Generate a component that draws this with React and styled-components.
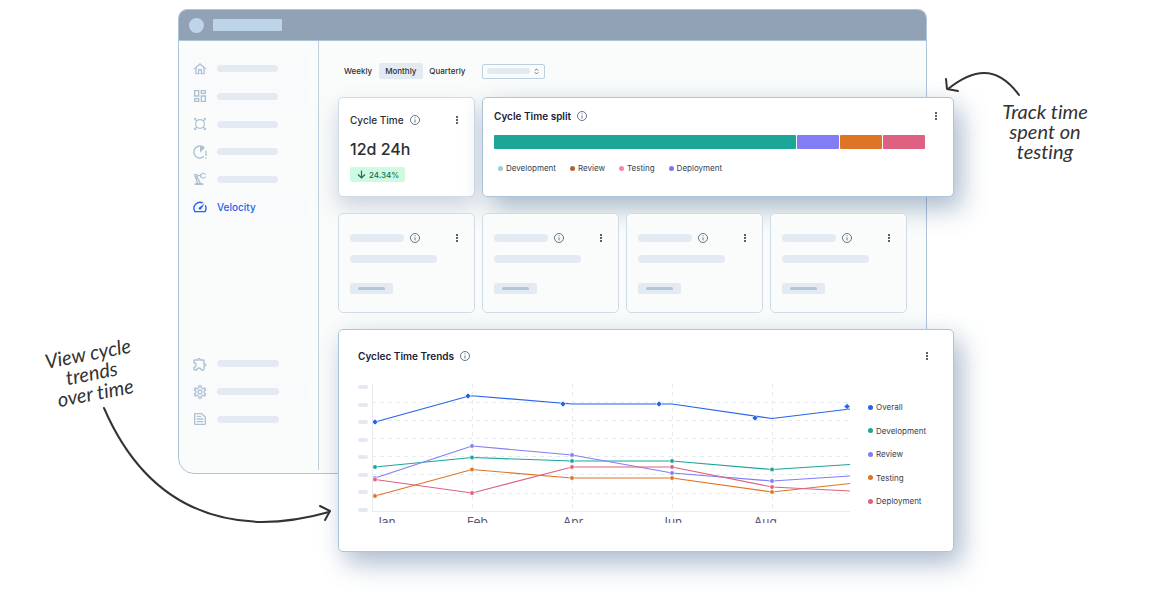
import React from 'react';
import styled, { createGlobalStyle } from 'styled-components';
import {
  MdOutlineHome,
  MdOutlineDashboard,
  MdRunningWithErrors,
  MdOutlinePrecisionManufacturing,
  MdOutlineSpeed,
  MdOutlineExtension,
  MdOutlineSettings,
  MdOutlineTextSnippet,
} from 'react-icons/md';

const colors = {
  surface: '#fafcfb',
  border: '#aec4d8',
  softBorder: '#cfdce8',
  bar: '#e4eaf2',
  header: '#91a2b5',
  icon: '#adc1d3',
  ink: '#2c2e36',
  blue: '#2563eb',
  teal: '#1ba698',
  violet: '#827df4',
  orange: '#de7425',
  pink: '#de6181',
};

const floating = `
  0 0 22px rgba(75, 110, 155, 0.06),
  8px 12px 26px rgba(75, 105, 145, 0.42)
`;

const GlobalStyle = createGlobalStyle`
  * {
    box-sizing: border-box;
  }
  body {
    margin: 0;
    background: #fff;
    color: ${colors.ink};
    font-family: Inter, "Liberation Sans", sans-serif;
  }
  button {
    border: 0;
    padding: 0;
    background: none;
    color: inherit;
    font-family: inherit;
    cursor: pointer;
  }
`;

const Page = styled.div`
  position: relative;
  display: grid;
  grid-template-columns: 178px minmax(0, 1fr) 204px;
  padding: 9px 0 39px;
`;

const Note = styled.p`
  justify-self: center;
  align-self: start;
  margin: 0;
  color: #333;
  font: italic 400 20px/20px Lato, sans-serif;
  font-variant-ligatures: none;
  text-align: center;
`;

const LeftNote = styled(Note)`
  margin-top: 334px;
  padding-left: 6px;
  transform: rotate(-11deg);
`;

const RightNote = styled(Note)`
  margin-top: 92px;
  padding-right: 22px;
`;

const Arrow = styled.svg`
  position: absolute;
  fill: none;
  stroke: #333;
  stroke-width: 2;
  stroke-linecap: round;
  stroke-linejoin: round;
  pointer-events: none;
`;

const LeftArrow = styled(Arrow)`
  left: 100px;
  top: 404px;
`;

const RightArrow = styled(Arrow)`
  right: 136px;
  top: 68px;
`;

const Window = styled.div`
  align-self: start;
  margin: 0 27px 78px 0;
  border: 1px solid ${colors.border};
  border-radius: 9px 9px 0 16px;
  background: ${colors.surface};
`;

const TitleBar = styled.header`
  display: flex;
  align-items: center;
  gap: 9px;
  height: 31px;
  padding: 0 10px;
  border-bottom: 1px solid ${colors.border};
  border-radius: 8px 8px 0 0;
  background: ${colors.header};
`;

const Avatar = styled.span`
  width: 15px;
  height: 15px;
  border-radius: 50%;
  background: #bed4e9;
`;

const Brand = styled.span`
  width: 69px;
  height: 12px;
  border-radius: 1px;
  background: #bed4e9;
`;

const Body = styled.div`
  display: grid;
  grid-template-columns: 140px minmax(0, 1fr);
`;

const Sidebar = styled.nav`
  display: flex;
  flex-direction: column;
  justify-content: space-between;
  margin-bottom: 3px;
  padding: 14px 10px 37px 7px;
  border-right: 1px solid #bed0e0;
`;

const NavGroup = styled.div`
  display: grid;
  grid-auto-rows: 1fr;
  height: ${({ $height }) => $height}px;
`;

const NavLink = styled.a`
  display: flex;
  align-items: center;
  gap: 9px;
  padding-left: 6px;
  border-radius: 2px;
  background: ${({ $tint }) => ($tint ? '#f9fafc' : 'transparent')};
  color: ${({ $active }) => ($active ? colors.blue : colors.icon)};
  font-size: 10px;
  font-weight: 500;
  text-decoration: none;
`;

const Skeleton = styled.span`
  display: block;
  width: ${({ $width }) => $width}px;
  height: ${({ $height }) => $height || 8}px;
  border-radius: 4px;
  background: ${colors.bar};
`;

const Main = styled.main`
  padding: 22px 19px 0;
`;

const Toolbar = styled.div`
  display: flex;
  align-items: center;
  gap: 10px;
  margin-bottom: 18px;
`;

const Tabs = styled.div`
  display: flex;
`;

const Tab = styled.button`
  height: 16px;
  padding: 0 7px 0 6px;
  border-radius: 2px;
  background: ${({ $active }) => ($active ? colors.bar : 'none')};
  font-size: 8px;
  font-weight: 500;
`;

const Picker = styled.label`
  display: grid;
  grid-template-columns: 1fr auto;
  align-items: center;
  width: 63px;
  height: 15px;
  padding: 0 5px 0 4px;
  border: 1px solid #bccfe0;
  border-radius: 2px;
`;

const PickerSelect = styled.select`
  grid-area: 1 / 1 / 2 / 3;
  width: 100%;
  height: 12px;
  border: 0;
  background: none;
  appearance: none;
  font-size: 8px;
`;

const PickerBar = styled(Skeleton)`
  grid-area: 1 / 1;
`;

const PickerIcon = styled.svg`
  grid-area: 1 / 2;
`;

const Cards = styled.div`
  display: grid;
  grid-template-columns: repeat(4, minmax(0, 1fr));
  gap: 7px;
  margin-bottom: 16px;
`;

const Card = styled.section`
  min-height: 100px;
  padding: 15px 11px 0;
  border: 1px solid ${colors.softBorder};
  border-radius: 5px;
  background: #fff;
`;

const MetricCard = styled(Card)`
  box-shadow: 0 10px 22px rgba(70, 95, 140, 0.26);
`;

const SplitCard = styled(Card)`
  grid-column: 2 / 5;
  margin-right: -47px;
  padding-top: 11px;
  border-color: ${colors.border};
  box-shadow: ${floating};
`;

const EmptyCard = styled(Card)`
  padding-top: 17px;
  background: ${colors.surface};
`;

const TrendCard = styled(Card)`
  margin: 0 -47px -79px 0;
  padding: 19px 20px 28px 19px;
  border-color: ${colors.border};
  box-shadow: ${floating};
`;

const CardHeader = styled.div`
  display: flex;
  align-items: center;
  gap: 5px;
  height: 14px;
`;

const Title = styled.h2`
  margin: 0;
  color: ${({ $strong }) => ($strong ? '#1c2033' : colors.ink)};
  font-size: 10px;
  font-weight: ${({ $strong }) => ($strong ? 600 : 500)};
  line-height: 14px;
  white-space: nowrap;
`;

const MenuButton = styled.button`
  display: flex;
  justify-content: center;
  width: 12px;
  margin-left: auto;
`;

const Value = styled.div`
  margin: 12px 0 8px;
  font-size: 16px;
  font-weight: 500;
  line-height: 20px;
`;

const Change = styled.div`
  display: flex;
  align-items: center;
  gap: 3px;
  width: fit-content;
  height: 15px;
  padding: 0 6px 0 7px;
  border-radius: 2px;
  background: #cffae2;
  color: #146c54;
  font-size: 8px;
  font-weight: 500;
`;

const Split = styled.div`
  display: flex;
  gap: 1px;
  height: 14px;
  margin: 12px 17px 13px 0;
`;

const SplitPart = styled.span`
  flex: ${({ $share }) => $share} 1 0;
  border-radius: 1px;
  background: ${({ $color }) => $color};
`;

const Legend = styled.ul`
  display: flex;
  flex-direction: ${({ $vertical }) => ($vertical ? 'column' : 'row')};
  justify-content: ${({ $vertical }) => ($vertical ? 'space-between' : 'flex-start')};
  gap: ${({ $vertical }) => ($vertical ? 0 : 14)}px;
  margin: 0;
  padding: ${({ $vertical }) => ($vertical ? '17px 7px 16px 0' : '0 4px')};
  list-style: none;
`;

const LegendItem = styled.li`
  display: flex;
  align-items: center;
  gap: 3px;
  color: #374151;
  font-size: 8px;
  line-height: 12px;
  &::before {
    content: '';
    width: 5px;
    height: 5px;
    border-radius: 50%;
    background: ${({ $color }) => $color};
  }
`;

const SkeletonLine = styled(Skeleton)`
  margin: 10px 0 20px;
`;

const Tag = styled.span`
  display: flex;
  align-items: center;
  justify-content: center;
  width: 43px;
  height: 11px;
  border-radius: 2px;
  background: ${colors.bar};
  &::before {
    content: '';
    width: 27px;
    height: 3px;
    border-radius: 2px;
    background: #b0c6d9;
  }
`;

const ChartRow = styled.div`
  display: flex;
  margin-top: 21px;
`;

const YAxis = styled.div`
  display: flex;
  flex-direction: column;
  justify-content: space-between;
  height: 127px;
  margin: 1px 4px 0 0;
`;

const Chart = styled.svg`
  flex: 1;
  min-width: 0;
  margin-right: 18px;
`;

const MonthLabel = styled.text`
  fill: #5b5478;
  font-size: 12px;
`;

const DetectIcon = ({ size }) => (
  <svg width={size} height={size} viewBox="0 0 24 24" fill="none" stroke="currentColor" strokeWidth="1.800">
    <circle cx="12" cy="12" r="6.500" />
    <path d="M4 6.500V4h2.500M17.500 4H20v2.500M20 17.500V20h-2.500M6.500 20H4v-2.500M5.500 5.500l2 2M18.500 5.500l-2 2M5.500 18.500l2-2M18.500 18.500l-2-2" />
  </svg>
);

const InfoIcon = () => (
  <svg width="12" height="12" viewBox="0 0 12 12" fill="none" stroke="#64748b">
    <circle cx="6" cy="6" r="4.500" />
    <path d="M6 5.500v3M6 3.300v1" />
  </svg>
);

const Menu = () => (
  <MenuButton type="button" aria-label="More options">
    <svg width="4" height="10" viewBox="0 0 4 10" fill="#252b3b">
      <circle cx="2" cy="2" r="1" />
      <circle cx="2" cy="5" r="1" />
      <circle cx="2" cy="8" r="1" />
    </svg>
  </MenuButton>
);

const topLinks = [
  { name: 'Home', icon: MdOutlineHome, tint: true },
  { name: 'Dashboard', icon: MdOutlineDashboard, tint: true },
  { name: 'Detection', icon: DetectIcon },
  { name: 'Incidents', icon: MdRunningWithErrors },
  { name: 'Automation', icon: MdOutlinePrecisionManufacturing },
  { name: 'Velocity', icon: MdOutlineSpeed, tint: true, active: true },
];

const bottomLinks = [
  { name: 'Extensions', icon: MdOutlineExtension },
  { name: 'Settings', icon: MdOutlineSettings, tint: true },
  { name: 'Docs', icon: MdOutlineTextSnippet },
];

const split = [
  { share: 302, color: colors.teal },
  { share: 42, color: colors.violet },
  { share: 42, color: colors.orange },
  { share: 42, color: colors.pink },
];

const splitLegend = [
  { name: 'Development', color: '#98d3cb' },
  { name: 'Review', color: '#b2633b' },
  { name: 'Testing', color: '#f587ad' },
  { name: 'Deployment', color: '#7b75f0' },
];

const xs = [3, 100, 200, 300, 400, 478];

const series = [
  { name: 'Development', color: colors.teal, ys: [83, 73.5, 77, 77, 85.500, 80.500] },
  { name: 'Review', color: colors.violet, ys: [94, 62, 71, 89, 97, 92] },
  { name: 'Testing', color: colors.orange, ys: [112, 85.500, 94, 94, 108, 99.500] },
  { name: 'Deployment', color: colors.pink, ys: [95.500, 109, 83, 83, 103, 107] },
];

const overall = {
  line: '3,38 97,12 103,12 200,20 300,20 400,34.500 478,25',
  marks: [[3, 38], [96, 12], [191, 20], [287, 20], [383, 34], [475, 22.500]],
};

const months = [
  { name: 'Jan', x: 3 },
  { name: 'Feb', x: 95 },
  { name: 'Apr', x: 191 },
  { name: 'Jun', x: 289 },
  { name: 'Aug', x: 382 },
];

const NavItem = ({ name, icon: Icon, tint, active, width }) => (
  <NavLink href="#" aria-label={name} $tint={tint} $active={active}>
    <Icon size={16} />
    {active ? name : <Skeleton $width={width} $height={7} />}
  </NavLink>
);

const TrendChart = () => (
  <Chart viewBox="0 0 478 139">
    <g stroke="#e6ebf0" fill="none">
      <path d="M.5 0v127.500H478" />
      <path
        strokeDasharray="4 4"
        d="M0 18.500h478M0 36.500h478M0 54.500h478M0 72.500h478M0 90.500h478M0 109.500h478"
      />
      <path strokeDasharray="4 4" d="M100.500 0v127M200.500 0v127M300.500 0v127M400.500 0v127" />
    </g>
    {series.map(({ name, color, ys }) => (
      <g key={name}>
        <polyline
          points={ys.map((y, i) => `${xs[i]},${y}`).join(' ')}
          fill="none"
          stroke={color}
          strokeWidth="1.200"
        />
        {ys.slice(0, 5).map((y, i) => (
          <circle key={xs[i]} cx={xs[i]} cy={y} r="2.300" fill={color} stroke="#fff" strokeWidth=".6" />
        ))}
      </g>
    ))}
    <polyline points={overall.line} fill="none" stroke={colors.blue} strokeWidth="1.200" />
    {overall.marks.map(([x, y]) => (
      <path
        key={x}
        d={`M${x - 3} ${y}l3-3 3 3-3 3z`}
        fill={colors.blue}
        stroke="#fff"
        strokeWidth=".6"
      />
    ))}
    {months.map(({ name, x }) => (
      <MonthLabel key={name} x={x} y="142">{name}</MonthLabel>
    ))}
  </Chart>
);

const App = () => (
  <>
    <GlobalStyle />
    <Page>
      <LeftNote>
        View cycle
        <br />
        trends
        <br />
        over time
      </LeftNote>
      <Window>
        <TitleBar>
          <Avatar />
          <Brand />
        </TitleBar>
        <Body>
          <Sidebar>
            <NavGroup $height={166}>
              {topLinks.map((link) => <NavItem key={link.name} width={61} {...link} />)}
            </NavGroup>
            <NavGroup $height={83}>
              {bottomLinks.map((link) => <NavItem key={link.name} width={62} {...link} />)}
            </NavGroup>
          </Sidebar>
          <Main>
            <Toolbar>
              <Tabs>
                <Tab type="button">Weekly</Tab>
                <Tab type="button" $active>Monthly</Tab>
                <Tab type="button">Quarterly</Tab>
              </Tabs>
              <Picker>
                <PickerSelect aria-label="Team">
                  <option aria-label="All" />
                </PickerSelect>
                <PickerBar $width={43} $height={6} />
                <PickerIcon width="5" height="7" viewBox="0 0 6 8" fill="none" stroke="#4b5563">
                  <path d="M1 3l2-2 2 2M1 5l2 2 2-2" />
                </PickerIcon>
              </Picker>
            </Toolbar>
            <Cards>
              <MetricCard>
                <CardHeader>
                  <Title>Cycle Time</Title>
                  <InfoIcon />
                  <Menu />
                </CardHeader>
                <Value>12d 24h</Value>
                <Change>
                  <svg width="9" height="9" viewBox="0 0 9 9" fill="none" stroke="currentColor" strokeWidth="1.200">
                    <path d="M4.500 .5v7.500M1 4.500L4.500 8 8 4.500" />
                  </svg>
                  24.34%
                </Change>
              </MetricCard>
              <SplitCard>
                <CardHeader>
                  <Title $strong>Cycle Time split</Title>
                  <InfoIcon />
                  <Menu />
                </CardHeader>
                <Split>
                  {split.map(({ share, color }) => (
                    <SplitPart key={color} $share={share} $color={color} />
                  ))}
                </Split>
                <Legend>
                  {splitLegend.map(({ name, color }) => (
                    <LegendItem key={name} $color={color}>{name}</LegendItem>
                  ))}
                </Legend>
              </SplitCard>
            </Cards>
            <Cards>
              {[1, 2, 3, 4].map((id) => (
                <EmptyCard key={id}>
                  <CardHeader>
                    <Skeleton $width={54} />
                    <InfoIcon />
                    <Menu />
                  </CardHeader>
                  <SkeletonLine $width={87} />
                  <Tag />
                </EmptyCard>
              ))}
            </Cards>
            <TrendCard>
              <CardHeader>
                <Title $strong>Cyclec Time Trends</Title>
                <InfoIcon />
                <Menu />
              </CardHeader>
              <ChartRow>
                <YAxis>
                  {[8, 7, 6, 5, 4, 3, 2, 1].map((tick) => (
                    <Skeleton key={tick} $width={10} $height={4} />
                  ))}
                </YAxis>
                <TrendChart />
                <Legend $vertical>
                  <LegendItem $color={colors.blue}>Overall</LegendItem>
                  {series.map(({ name, color }) => (
                    <LegendItem key={name} $color={color}>{name}</LegendItem>
                  ))}
                </Legend>
              </ChartRow>
            </TrendCard>
          </Main>
        </Body>
      </Window>
      <RightNote>
        Track time
        <br />
        spent on
        <br />
        testing
      </RightNote>
      <LeftArrow width="234" height="122" viewBox="100 404 234 122">
        <path d="M104 408C120 445 160 520 262 522c23 0 46-4 67-10" />
        <path d="M320 506l10 5-5 9" />
      </LeftArrow>
      <RightArrow width="80" height="30" viewBox="942 68 80 30">
        <path d="M1019 95c-11-15-23-22-35-22-13 0-26 8-36 16" />
        <path d="M946 79l1 10 11 2" />
      </RightArrow>
    </Page>
  </>
);

export default App;
